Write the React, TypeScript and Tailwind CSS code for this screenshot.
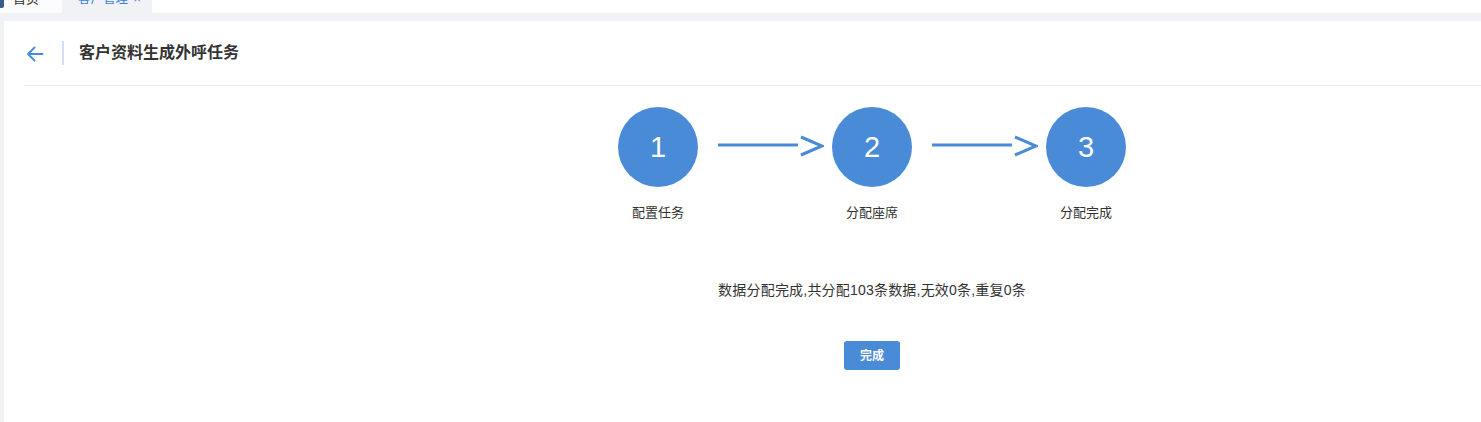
import React from 'react';

const steps = [
    { num: '1', label: '配置任务' },
    { num: '2', label: '分配座席' },
    { num: '3', label: '分配完成' },
];

const Connector: React.FC = () => (
    <div className="w-[134px] h-[80px] flex items-center justify-end pr-[8px]">
        <svg width="108" height="24" viewBox="0 0 108 24" fill="none">
            <line x1="2" y1="10" x2="82" y2="10" stroke="#4a8bd8" strokeWidth="3" />
            <polyline points="85,2 106,11 85,20" stroke="#4a8bd8" strokeWidth="3" fill="none" />
        </svg>
    </div>
);

const App: React.FC = () => {
    return (
        <div className="w-[1481px] h-[422px] overflow-hidden bg-white font-['Liberation_Sans','Noto_Sans_CJK_SC',sans-serif] text-[#333]">
            {/* tab strip, scrolled so only its bottom shows */}
            <div className="h-[13px] flex items-end bg-white overflow-hidden">
                <div className="relative w-[62px] h-[13px] bg-[#fcfcfd]">
                    <div className="absolute left-0 top-0 w-[4px] h-[8px] rounded-br-[2px] bg-[#3d5a8c]" />
                    <span className="absolute left-[13px] bottom-[5px] text-[13px] leading-[18px] text-[#333]">首页</span>
                </div>
                <div className="relative w-[90px] h-[13px] bg-[#f0f2f6]">
                    <span className="absolute left-[16px] bottom-[5px] text-[12.5px] leading-[18px] text-[#3b7fd9] whitespace-nowrap">
                        客户管理 <span className="ml-[2px]">×</span>
                    </span>
                </div>
            </div>
            <div className="h-[8px] bg-[#f1f2f6]" />

            <div className="flex h-[401px]">
                <div className="w-[4px] shrink-0 bg-[#f1f2f6]" />
                <div className="flex-1 min-w-0 bg-white pl-[20px]">
                    <div className="h-[65px] flex items-center border-b border-[#eceef1]">
                        <svg width="18" height="16" viewBox="0 0 18 16" fill="none" className="ml-[2px] mt-[1px]">
                            <path d="M16.5 8H2M8.5 1.5L2 8l6.5 6.5" stroke="#4a8bd8" strokeWidth="1.8" strokeLinecap="round" strokeLinejoin="round" />
                        </svg>
                        <div className="ml-[18px] w-[2px] h-[24px] bg-[#cfe0f5]" />
                        <h1 className="ml-[15px] text-[16px] font-bold text-[#333] leading-none">客户资料生成外呼任务</h1>
                    </div>

                    <div className="w-[1696px] flex flex-col items-center">
                        <div className="flex items-start mt-[21px]">
                            {steps.map((s, i) => (
                                <React.Fragment key={s.num}>
                                    {i > 0 && <Connector />}
                                    <div className="w-[80px] flex flex-col items-center">
                                        <div className="w-[80px] h-[80px] rounded-full bg-[#4a8bd8] flex items-center justify-center text-white text-[29px] pt-[2px]">
                                            {s.num}
                                        </div>
                                        <div className="mt-[17px] text-[13px] leading-[18px] whitespace-nowrap text-[#333]">{s.label}</div>
                                    </div>
                                </React.Fragment>
                            ))}
                        </div>

                        <p className="mt-[58px] text-[14px] leading-[20px] tracking-[0.2px] text-[#333]">
                            数据分配完成,共分配103条数据,无效0条,重复0条
                        </p>

                        <button className="mt-[41px] w-[56px] h-[29px] rounded-[3px] bg-[#4a8bd8] text-white text-[12px] font-bold">
                            完成
                        </button>
                    </div>
                </div>
            </div>
        </div>
    );
};

export default App;
